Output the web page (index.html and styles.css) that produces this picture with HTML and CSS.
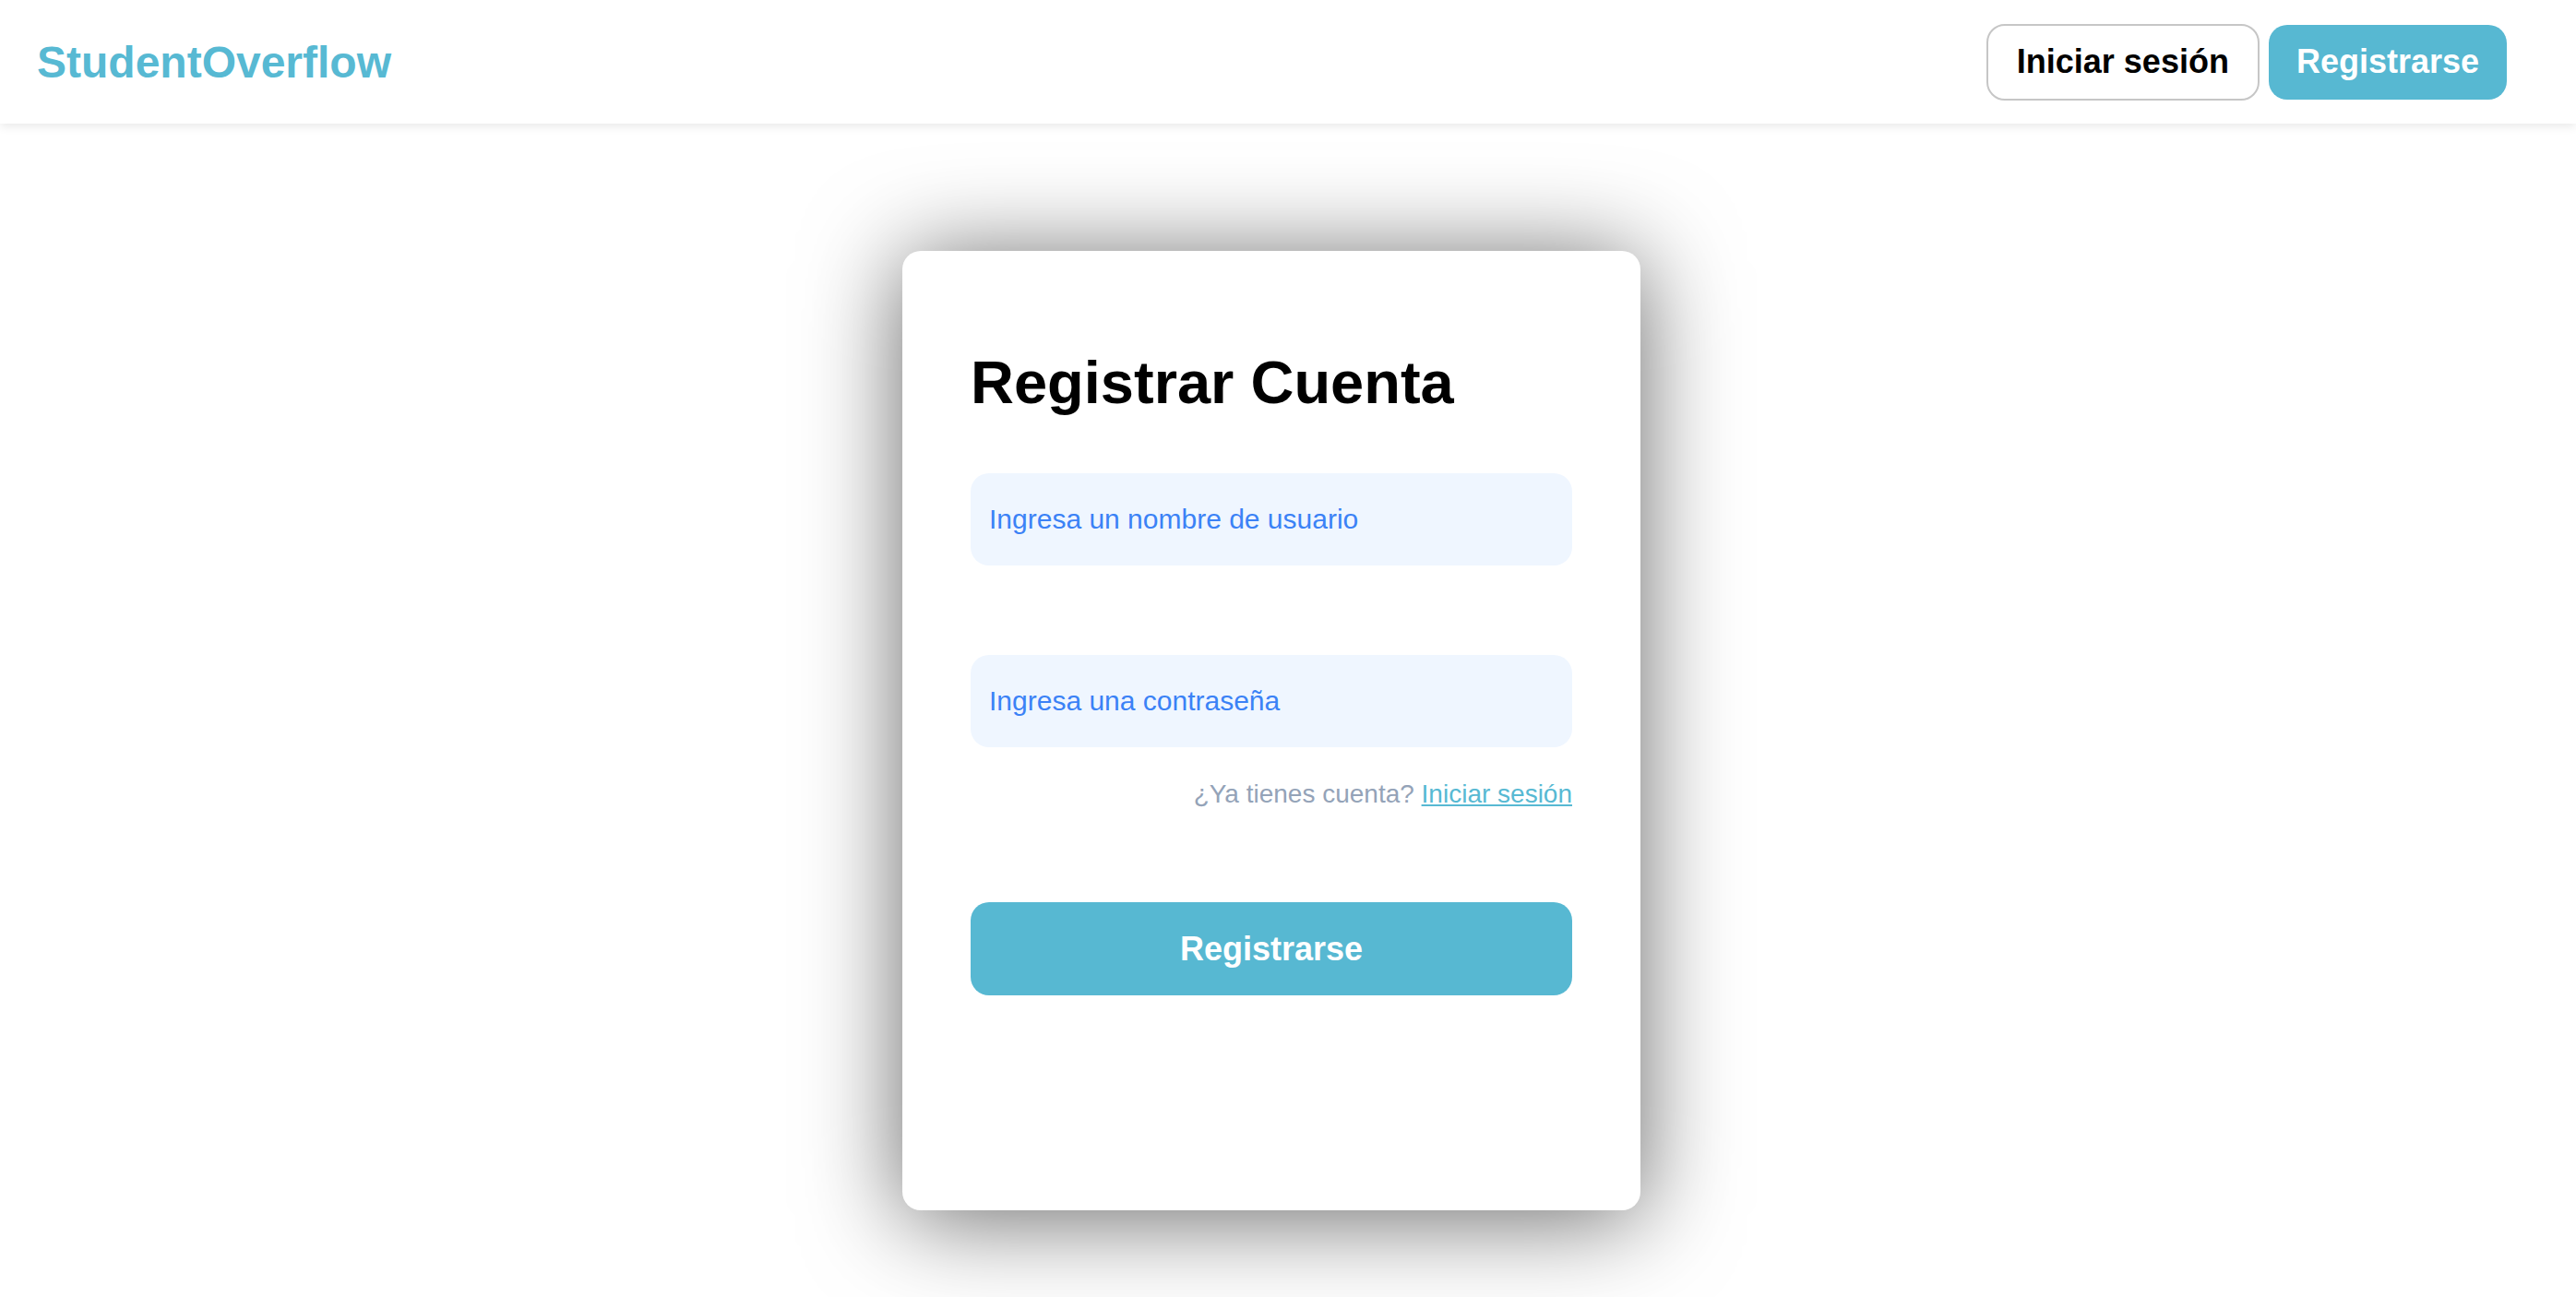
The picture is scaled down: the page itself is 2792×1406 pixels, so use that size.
FILE: index.html
```html
<!DOCTYPE html>
<html lang="es">
<head>
<meta charset="utf-8">
<title>StudentOverflow - Registrar Cuenta</title>
<link rel="stylesheet" href="styles.css">
</head>
<body>
<header class="topbar">
  <a class="logo" href="#">StudentOverflow</a>
  <nav class="actions">
    <button class="btn btn-outline">Iniciar sesión</button>
    <button class="btn btn-primary">Registrarse</button>
  </nav>
</header>
<main class="main">
  <form class="card">
    <h1 class="title">Registrar Cuenta</h1>
    <input class="field" type="text" placeholder="Ingresa un nombre de usuario">
    <input class="field field-second" type="password" placeholder="Ingresa una contraseña">
    <p class="hint">¿Ya tienes cuenta? <a class="hint-link" href="#">Iniciar sesión</a></p>
    <button class="submit" type="button">Registrarse</button>
  </form>
</main>
</body>
</html>
```
FILE: styles.css
```css
* { box-sizing: border-box; }

html, body {
  margin: 0;
  padding: 0;
  background: #ffffff;
  font-family: "Liberation Sans", Arial, sans-serif;
}

body {
  min-height: 100vh;
  overflow: hidden;
}

.topbar {
  height: 134px;
  display: flex;
  align-items: center;
  justify-content: space-between;
  padding: 0 75px 0 40px;
  background: #ffffff;
  box-shadow: 0 3px 10px rgba(0, 0, 0, 0.09);
  position: relative;
  z-index: 2;
}

.logo {
  font-size: 48px;
  font-weight: 700;
  color: #57b9d3;
  text-decoration: none;
}

.actions {
  display: flex;
  align-items: center;
  gap: 10px;
}

.btn {
  font-family: "Liberation Sans", Arial, sans-serif;
  font-size: 36px;
  font-weight: 700;
  border-radius: 20px;
  cursor: pointer;
}

.btn-outline {
  height: 83px;
  padding: 0 31px;
  background: #ffffff;
  color: #000000;
  border: 2px solid #c6c6c6;
}

.btn-primary {
  height: 81px;
  padding: 0 30px;
  background: #57b8d2;
  color: #ffffff;
  border: none;
}

.main {
  display: flex;
  justify-content: center;
  padding: 138px 36px 94px 0;
}

.card {
  width: 800px;
  height: 1040px;
  padding: 74px;
  background: #ffffff;
  border-radius: 20px;
  box-shadow: 0 8px 105px rgba(0, 0, 0, 0.6);
  display: flex;
  flex-direction: column;
}

.title {
  margin: 31px 0 61px;
  font-size: 65px;
  font-weight: 700;
  line-height: normal;
  color: #000000;
}

.field {
  height: 100px;
  width: 100%;
  padding: 0 20px;
  border: none;
  border-radius: 20px;
  background: #eff6ff;
  font-family: "Liberation Sans", Arial, sans-serif;
  font-size: 30px;
  color: #1e3a8a;
  outline: none;
}

.field::placeholder {
  color: #3b82f6;
  opacity: 1;
}

.field-second {
  margin-top: 97px;
}

.hint {
  margin: 35px 0 0;
  text-align: right;
  font-size: 28px;
  line-height: normal;
  color: #94a3b8;
}

.hint-link {
  color: #57b9d3;
  text-decoration: underline;
}

.submit {
  margin-top: 101px;
  height: 101px;
  width: 100%;
  border: none;
  border-radius: 20px;
  background: #57b8d2;
  color: #ffffff;
  font-family: "Liberation Sans", Arial, sans-serif;
  font-size: 36px;
  font-weight: 700;
  cursor: pointer;
}
```
